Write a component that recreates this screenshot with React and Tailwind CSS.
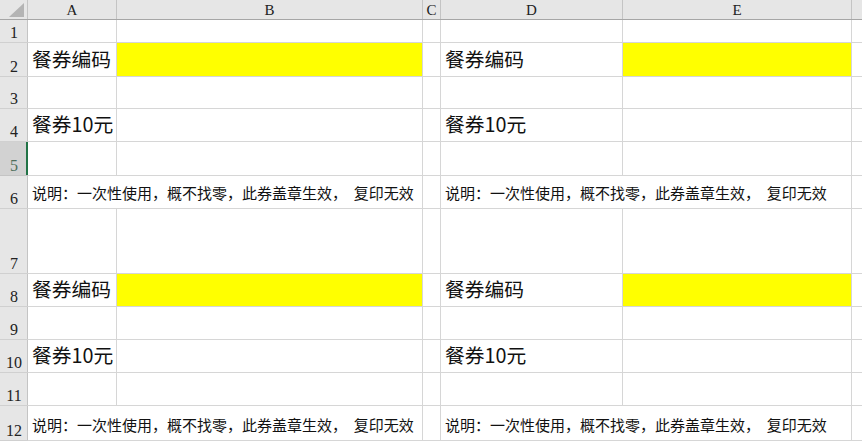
const cols = [
  { id: "A", w: "w-[89px]" },
  { id: "B", w: "w-[306px]" },
  { id: "C", w: "w-[18px]" },
  { id: "D", w: "w-[182px]" },
  { id: "E", w: "w-[229px]" },
  { id: "F", w: "w-[60px]" },
];

const rowHeights = {
  1: "h-[23px]",
  2: "h-[34px]",
  3: "h-[32px]",
  4: "h-[33px]",
  5: "h-[34px]",
  6: "h-[33px]",
  7: "h-[65px]",
  8: "h-[33px]",
  9: "h-[33px]",
  10: "h-[33px]",
  11: "h-[33px]",
  12: "h-[35px]",
};

const NOTE = "说明：一次性使用，概不找零，此券盖章生效，  复印无效";
const cjk = { fontFamily: '"Noto Sans CJK SC", "Noto Sans", sans-serif' };

// each coupon block repeats every 6 rows, left block in A/B, right block in D/E
function cellFor(row, col) {
  const r = ((row - 1) % 6) + 1;
  const label = col === "A" || col === "D";
  const code = col === "B" || col === "E";
  if (r === 2 && label) return { text: "餐券编码", size: "text-[19.8px] bottom-[7px]" };
  if (r === 2 && code) return { fill: true };
  if (r === 4 && label) return { text: "餐券10元", size: "text-[19.8px] bottom-[7px]" };
  // the note spills over into the next column, so that gridline is hidden
  if (r === 6 && label) return { text: NOTE, size: "text-[15px] bottom-[8px]", spill: true };
  return null;
}

function Cell({ row, col }) {
  const c = cellFor(row, col.id);
  return (
    <div
      className={`${col.w} relative shrink-0 border-b border-[#d6d6d6] ${
        c?.spill ? "" : "border-r"
      } ${c?.fill ? "bg-[#ffff00]" : "bg-white"}`}
    >
      {c?.text && (
        <div
          className={`absolute left-[4px] z-10 whitespace-pre leading-none text-[#111] ${c.size}`}
          style={cjk}
        >
          {c.text}
        </div>
      )}
    </div>
  );
}

export default function App() {
  const rows = Object.keys(rowHeights).map(Number);
  return (
    <div className="h-[445px] w-[862px] overflow-hidden bg-white" style={{ fontFamily: '"Liberation Serif", serif' }}>
      {/* column headers */}
      <div className="flex h-[20px] border-b border-[#a6a6a6] bg-[#e6e6e6]">
        <div className="relative w-[28px] shrink-0 border-r border-[#c4c4c4]">
          <svg className="absolute bottom-[2px] right-[3px]" width="15" height="14" viewBox="0 0 15 14">
            <polygon points="15,0 15,14 0,14" fill="#b4b4b4" />
          </svg>
        </div>
        {cols.map((c) => (
          <div
            key={c.id}
            className={`${c.w} flex shrink-0 items-end justify-center border-r border-[#c4c4c4] pb-[1px] text-[15px] leading-none text-[#222]`}
          >
            {c.id === "F" ? "" : c.id}
          </div>
        ))}
      </div>

      {rows.map((row) => {
        const active = row === 5;
        return (
          <div key={row} className={`flex ${rowHeights[row]}`}>
            <div
              className={`relative flex w-[28px] shrink-0 items-end justify-center border-b pb-[1px] text-[16px] leading-none ${
                active
                  ? "border-[#c4c4c4] bg-[#d2d2d2] text-[#4d6e5a]"
                  : "border-[#d0d0d0] bg-[#e6e6e6] text-[#222]"
              }`}
            >
              {row}
              <div
                className={`absolute right-0 top-0 h-full ${
                  active ? "w-[2px] bg-[#217346]" : "w-px bg-[#c4c4c4]"
                }`}
              />
            </div>
            {cols.map((c) => (
              <Cell key={c.id} row={row} col={c} />
            ))}
          </div>
        );
      })}
    </div>
  );
}
